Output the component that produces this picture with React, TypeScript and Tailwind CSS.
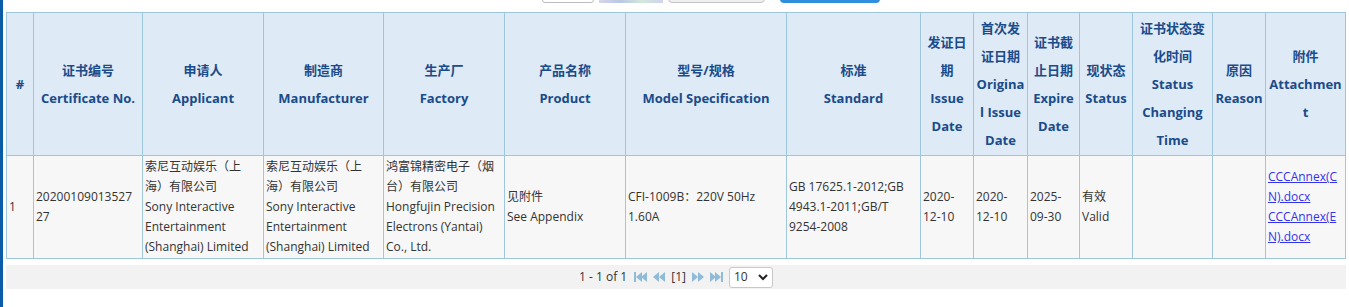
import React from 'react';

const cols = [27, 109, 121, 120, 121, 121, 161, 134, 53, 54, 52, 53, 80, 53, 80];

const headers = [
  { cn: '', en: '#' },
  { cn: '证书编号', en: 'Certificate No.' },
  { cn: '申请人', en: 'Applicant' },
  { cn: '制造商', en: 'Manufacturer' },
  { cn: '生产厂', en: 'Factory' },
  { cn: '产品名称', en: 'Product' },
  { cn: '型号/规格', en: 'Model Specification' },
  { cn: '标准', en: 'Standard' },
  { cn: '发证日期', en: 'Issue Date' },
  { cn: '首次发证日期', en: 'Original Issue Date' },
  { cn: '证书截止日期', en: 'Expire Date' },
  { cn: '现状态', en: 'Status' },
  { cn: '证书状态变化时间', en: 'Status Changing Time' },
  { cn: '原因', en: 'Reason' },
  { cn: '附件', en: 'Attachment' },
];

function PagerIcon({ kind }: { kind: 'first' | 'prev' | 'next' | 'last' }) {
  const w = kind === 'first' || kind === 'last' ? 13 : 12;
  return (
    <svg width={w} height="10" viewBox={`0 0 ${w} 10`} className="fill-[#8fbbd9]">
      {kind === 'first' && (
        <>
          <rect x="0" y="0" width="2" height="10" />
          <polygon points="8,0 8,10 2,5" />
          <polygon points="13,0 13,10 7,5" />
        </>
      )}
      {kind === 'prev' && (
        <>
          <polygon points="6,0 6,10 0,5" />
          <polygon points="12,0 12,10 6,5" />
        </>
      )}
      {kind === 'next' && (
        <>
          <polygon points="0,0 0,10 6,5" />
          <polygon points="6,0 6,10 12,5" />
        </>
      )}
      {kind === 'last' && (
        <>
          <polygon points="0,0 0,10 6,5" />
          <polygon points="5,0 5,10 11,5" />
          <rect x="11" y="0" width="2" height="10" />
        </>
      )}
    </svg>
  );
}

export default function App() {
  const cell = 'border border-[#9fc7dc] align-middle break-words';
  const td = cell + ' pl-[2px] pr-[4px]';

  return (
    <div className="flex min-h-[307px] bg-white font-['Open_Sans','Noto_Sans_CJK_SC',sans-serif] [text-spacing-trim:space-all]">
      <div className="w-[3px] shrink-0 bg-[#0b5ca8]" />
      <div className="ml-[3px] w-[1340px]">
        {/* search controls, scrolled mostly out of view */}
        <div className="flex h-[3px] items-end gap-[5px] overflow-hidden pl-[536px]">
          <div className="h-[20px] w-[52px] rounded-[3px] border border-[#bbb] bg-white" />
          <div className="h-[20px] w-[64px] bg-[linear-gradient(90deg,#d9d4ee,#b9c8e6,#d4e8d9,#cfd3f0)]" />
          <div className="h-[20px] w-[97px] rounded-[4px] border border-[#c4c4c4] bg-[#efefef]" />
          <div className="ml-[10px] h-[20px] w-[100px] rounded-[4px] bg-[#2f8fdc]" />
        </div>

        <table className="mt-[9px] w-[1340px] table-fixed border-collapse border border-[#9fc7dc]">
          <colgroup>
            {cols.map((w, i) => (
              <col key={i} style={{ width: w }} />
            ))}
          </colgroup>
          <thead>
            <tr className="h-[143px] bg-[#deeaf5] text-[13px] font-bold leading-[28px] text-[#1a4b8b]">
              {headers.map((h, i) => (
                <th key={i} className={cell + ' px-[2px] text-center'}>
                  {h.cn && <div>{h.cn}</div>}
                  <div>{h.en}</div>
                </th>
              ))}
            </tr>
          </thead>
          <tbody>
            <tr className="h-[103px] bg-[#f7f7f7] text-[12px] leading-[20px] text-[#333]">
              <td className={td}>1</td>
              <td className={td}>2020010901352727</td>
              <td className={td}>
                索尼互动娱乐（上海）有限公司
                <br />
                Sony Interactive Entertainment (Shanghai) Limited
              </td>
              <td className={td}>
                索尼互动娱乐（上海）有限公司
                <br />
                Sony Interactive Entertainment (Shanghai) Limited
              </td>
              <td className={td}>
                鸿富锦精密电子（烟台）有限公司
                <br />
                Hongfujin Precision Electrons (Yantai) Co., Ltd.
              </td>
              <td className={td}>
                见附件
                <br />
                See Appendix
              </td>
              <td className={td}>CFI-1009B：220V 50Hz 1.60A</td>
              <td className={td}>GB 17625.1-2012;GB 4943.1-2011;GB/T 9254-2008</td>
              <td className={td}>2020-12-10</td>
              <td className={td}>2020-12-10</td>
              <td className={td}>2025-09-30</td>
              <td className={td}>
                有效
                <br />
                Valid
              </td>
              <td className={td}></td>
              <td className={td}></td>
              <td className={td}>
                <a href="#" className="text-[#3333ee] underline">CCCAnnex(CN).docx</a>
                <br />
                <a href="#" className="text-[#3333ee] underline">CCCAnnex(EN).docx</a>
              </td>
            </tr>
          </tbody>
        </table>

        <div className="mt-[6px] flex h-[24px] items-center justify-center gap-[6px] bg-[#f2f2f2] text-[12px] text-[#333]">
          <span className="mr-[1px]">1 - 1 of 1</span>
          <PagerIcon kind="first" />
          <PagerIcon kind="prev" />
          <span>[1]</span>
          <PagerIcon kind="next" />
          <PagerIcon kind="last" />
          <div className="flex h-[21px] w-[44px] items-center justify-between rounded-[3px] border border-[#c8c8c8] bg-white px-[4px]">
            <span>10</span>
            <svg width="10" height="7" viewBox="0 0 10 7" className="fill-none stroke-[#222]" strokeWidth="2">
              <polyline points="1,1 5,5 9,1" />
            </svg>
          </div>
        </div>
      </div>
    </div>
  );
}
